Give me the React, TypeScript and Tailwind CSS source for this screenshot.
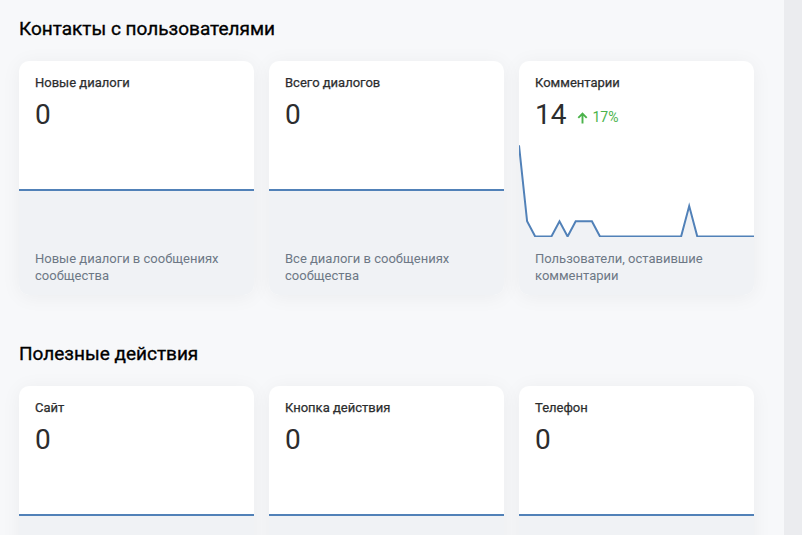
import React from 'react';

type Stat = {
  title: string;
  value: string;
  delta?: string;
  points?: number[];
  description?: string;
};

const contacts: Stat[] = [
  { title: 'Новые диалоги', value: '0', description: 'Новые диалоги в сообщениях сообщества' },
  { title: 'Всего диалогов', value: '0', description: 'Все диалоги в сообщениях сообщества' },
  {
    title: 'Комментарии',
    value: '14',
    delta: '17%',
    points: [6, 1, 0, 0, 0, 1, 0, 1, 1, 1, 0, 0, 0, 0, 0, 0, 0, 0, 0, 0, 0, 2, 0, 0, 0, 0, 0, 0, 0, 0],
    description: 'Пользователи, оставившие комментарии',
  },
];

const actions: Stat[] = [
  { title: 'Сайт', value: '0' },
  { title: 'Кнопка действия', value: '0' },
  { title: 'Телефон', value: '0' },
];

const W = 235;
const H = 106;

// small area chart, flat line in the middle when there is no data
const Sparkline: React.FC<{ points?: number[] }> = ({ points }) => {
  let line: string;
  if (!points || points.every((p) => p === 0)) {
    line = `M0 59 L${W} 59`;
  } else {
    const step = W / (points.length - 1);
    line = points
      .map((p, i) => `${i === 0 ? 'M' : 'L'}${(i * step).toFixed(1)} ${(105.5 - p * 15.2).toFixed(1)}`)
      .join(' ');
  }
  const area = `${line} L${W} ${H} L0 ${H} Z`;
  return (
    <svg viewBox={`0 0 ${W} ${H}`} preserveAspectRatio="none" className="block w-full h-[106px]">
      <path d={area} fill="#f0f2f5" />
      <path d={line} fill="none" stroke="#5181b8" strokeWidth="2" strokeLinejoin="miter" />
    </svg>
  );
};

const StatCard: React.FC<{ stat: Stat }> = ({ stat }) => (
  <div className="w-[235px] rounded-[10px] overflow-hidden bg-white shadow-[0_2px_20px_rgba(0,0,0,0.05)] flex flex-col">
    <div className="h-[70px] px-4 pt-[14px]">
      <div className="text-[13px] leading-[16px] text-[#2c2d2e] [-webkit-text-stroke:0.25px_#2c2d2e]">{stat.title}</div>
      <div className="flex items-center mt-[8px]">
        <span className="text-[28px] leading-[32px] text-[#2c2d2e]">{stat.value}</span>
        {stat.delta && (
          <span className="ml-[11px] mt-[5px] flex items-center text-[14px] text-[#4bb34b]">
            <svg width="11" height="12" viewBox="0 0 11 12" className="mr-[4px]">
              <path d="M5.5 11.5V1.8M1.3 5.8L5.5 1.6L9.7 5.8" fill="none" stroke="#4bb34b" strokeWidth="1.9" />
            </svg>
            {stat.delta}
          </span>
        )}
      </div>
    </div>
    <Sparkline points={stat.points} />
    <div className="bg-[#f0f2f5] px-4 pt-[13px] pb-[12px] h-[58px]">
      <p className="text-[13px] leading-[17px] text-[#6d7885]">{stat.description}</p>
    </div>
  </div>
);

const Section: React.FC<{ title: string; items: Stat[] }> = ({ title, items }) => (
  <section>
    <h2 className="text-[19px] leading-[24px] text-black [-webkit-text-stroke:0.35px_#000]">{title}</h2>
    <div className="flex gap-[15px] mt-[20px]">
      {items.map((s) => (
        <StatCard key={s.title} stat={s} />
      ))}
    </div>
  </section>
);

export default function App() {
  return (
    <div className="h-[535px] overflow-hidden flex bg-[#f7f8fa]" style={{ fontFamily: 'Roboto, "Noto Sans", sans-serif' }}>
      <main className="flex-1 pl-[19px] pt-[17px] flex flex-col gap-[47px]">
        <Section title="Контакты с пользователями" items={contacts} />
        <Section title="Полезные действия" items={actions} />
      </main>
      <div className="w-[18px] bg-[#ebecef]" />
    </div>
  );
}
